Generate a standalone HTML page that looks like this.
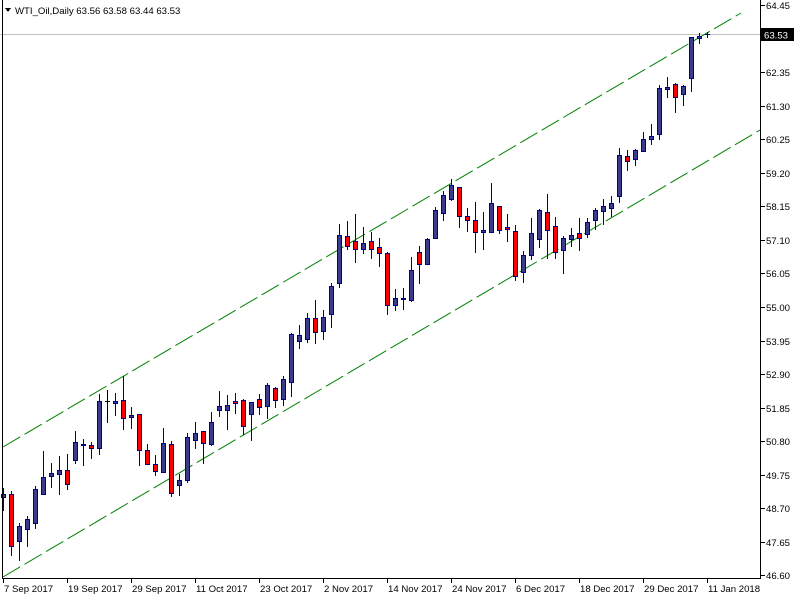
<!DOCTYPE html>
<html><head><meta charset="utf-8"><style>
html,body{margin:0;padding:0;background:#fff;width:800px;height:600px;overflow:hidden}
svg{display:block}
text{font-family:"Liberation Sans",sans-serif;font-size:9.6px;fill:#000}
</style></head><body>
<svg id="s" width="800" height="600" xmlns="http://www.w3.org/2000/svg" shape-rendering="crispEdges">
<rect width="800" height="600" fill="#fff"/>
<line x1="0" y1="34.5" x2="760" y2="34.5" stroke="#c0c0c0"/>
<g shape-rendering="auto">
<line x1="3" y1="447" x2="741" y2="13" stroke="#008000" stroke-dasharray="20 5"/>
<line x1="3" y1="577" x2="760" y2="130" stroke="#008000" stroke-dasharray="20 5"/>
</g>
<g id="c"></g>
<line x1="2.5" y1="0" x2="2.5" y2="578" stroke="#000"/>
<line x1="760.5" y1="0" x2="760.5" y2="579" stroke="#000"/>
<line x1="2" y1="578.5" x2="761" y2="578.5" stroke="#000"/>
<g id="ax"></g>
<rect x="761" y="28" width="33" height="13" fill="#000"/>
<text x="764" y="38.5" style="fill:#fff">63.53</text>
<polygon points="5,8 11,8 8,12" fill="#000"/>
<text x="15" y="14">WTI_Oil,Daily  63.56 63.58 63.44 63.53</text>
</svg>
<script>
var d=[
[3,494,497,488,510,'u'],[11,494,546,491,555,'d'],[19,526,541,523,560,'u'],[27,519,529,516,546,'u'],
[35,489,523,486,528,'u'],[43,477,494,451,494,'u'],[51,473,476,463,487,'u'],[59,470,474,456,494,'u'],
[67,470,484,454,489,'d'],[75,442,460,431,463,'u'],[83,444,445,439,465,'u'],[91,445,448,442,458,'d'],
[99,401,448,394,454,'u'],[107,401,401,390,422,'x'],[115,401,403,393,415,'u'],[123,400,418,376,429,'d'],
[131,415,417,407,428,'u'],[139,414,450,414,465,'d'],[147,450,464,444,464,'d'],[155,464,471,455,475,'d'],
[163,443,472,428,472,'u'],[171,444,493,441,496,'d'],[179,480,485,474,495,'u'],[187,437,480,433,482,'u'],
[195,433,440,422,448,'u'],[203,431,443,431,463,'d'],[211,422,444,412,445,'u'],[219,406,410,391,416,'u'],
[227,405,410,395,429,'u'],[235,401,403,393,413,'d'],[243,400,426,399,434,'d'],[251,402,414,402,440,'u'],
[259,399,407,394,414,'d'],[267,385,406,383,418,'u'],[275,388,400,387,407,'d'],[283,379,399,376,405,'u'],
[291,334,382,333,396,'u'],[299,335,341,325,348,'u'],[307,318,339,313,342,'u'],[315,318,332,300,343,'d'],
[323,317,331,310,339,'u'],[331,286,314,283,327,'u'],[339,235,283,224,287,'u'],[347,236,246,221,249,'d'],
[355,241,249,214,262,'d'],[363,243,249,227,253,'u'],[371,241,249,232,258,'d'],[379,247,253,238,266,'d'],
[387,253,305,252,314,'d'],[395,298,305,289,310,'u'],[403,298,299,288,309,'u'],[411,270,300,257,301,'u'],
[419,252,264,246,283,'d'],[427,239,264,238,264,'u'],[435,210,238,207,238,'u'],[443,195,213,191,220,'u'],
[451,185,199,179,200,'u'],[459,187,216,187,227,'d'],[467,216,220,208,231,'d'],[475,220,232,202,252,'d'],
[483,230,232,212,249,'u'],[491,203,232,183,232,'u'],[499,206,230,206,233,'d'],[507,227,229,214,241,'d'],
[515,231,276,225,280,'d'],[523,255,272,251,282,'u'],[531,233,255,218,259,'u'],[539,210,239,209,247,'u'],
[547,212,230,194,258,'d'],[555,226,252,217,258,'d'],[563,238,250,236,273,'u'],[571,235,239,228,246,'u'],
[579,233,238,218,250,'d'],[587,222,234,218,237,'u'],[595,210,220,208,229,'u'],[603,206,211,199,224,'u'],
[611,203,208,196,216,'u'],[619,155,196,148,202,'u'],[627,156,161,150,170,'d'],[635,150,159,149,165,'u'],
[643,139,151,132,151,'u'],[651,136,139,124,144,'u'],[659,88,134,85,139,'u'],[667,87,89,77,97,'u'],
[675,84,97,83,112,'d'],[683,86,94,85,105,'u'],[691,37,78,37,91,'u'],[699,36,38,33,43,'u'],[707,34,34,32,37,'u']];
var h='';
d.forEach(function(c){
 var x=c[0],col=c[5]=='x'?'#000':'#000080';
 h+='<line x1="'+(x+.5)+'" y1="'+c[3]+'" x2="'+(x+.5)+'" y2="'+(c[4]+1)+'" stroke="'+col+'"/>';
 if(c[5]=='x'||c[2]-c[1]<1){h+='<line x1="'+(x-2)+'" y1="'+(c[1]+.5)+'" x2="'+(x+3)+'" y2="'+(c[1]+.5)+'" stroke="'+col+'"/>';}
 else h+='<rect x="'+(x-1.5)+'" y="'+(c[1]+.5)+'" width="4" height="'+(c[2]-c[1])+'" fill="'+(c[5]=='d'?'#ff0000':'#3c3c8c')+'" stroke="#000080"/>';
});
document.getElementById('c').innerHTML=h;
var a='',p=['64.45','63.40','62.35','61.30','60.25','59.20','58.15','57.10','56.05','55.00','53.95','52.90','51.85','50.80','49.75','48.70','47.65','46.60'];
p.forEach(function(t,i){var y=Math.round(5+i*33.55);
 a+='<line x1="761" y1="'+(y+.5)+'" x2="765" y2="'+(y+.5)+'" stroke="#000"/>';
 if(i!=1)a+='<text x="766" y="'+(y+4)+'">'+t+'</text>';});
var L=['7 Sep 2017','19 Sep 2017','29 Sep 2017','11 Oct 2017','23 Oct 2017','2 Nov 2017','14 Nov 2017','24 Nov 2017','6 Dec 2017','18 Dec 2017','29 Dec 2017','11 Jan 2018'];
L.forEach(function(t,i){var x=3+i*64;
 a+='<line x1="'+(x+.5)+'" y1="579" x2="'+(x+.5)+'" y2="583" stroke="#000"/>';
 a+='<text x="'+(x+1)+'" y="592">'+t+'</text>';});
document.getElementById('ax').innerHTML=a;
</script>
</body></html>
